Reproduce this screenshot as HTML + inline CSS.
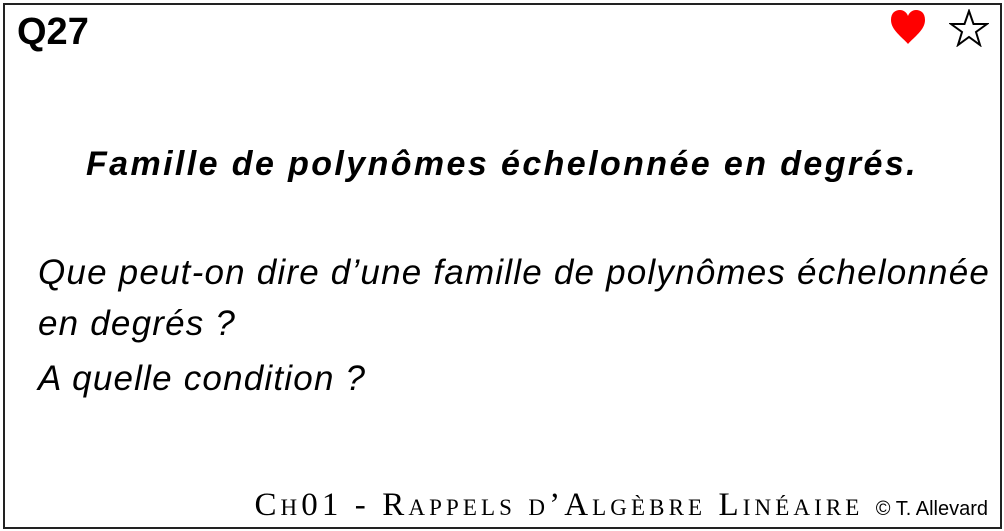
<!DOCTYPE html>
<html><head><meta charset="utf-8"><style>
html,body{margin:0;padding:0;background:#fff;}
body{width:1004px;height:531px;position:relative;overflow:hidden;font-family:"Liberation Sans",sans-serif;color:#000;}
.box{position:absolute;left:3px;top:3px;width:995px;height:522px;border:2px solid #222;}
.t{position:absolute;white-space:nowrap;line-height:1;}
.b{font-size:35px;font-style:italic;letter-spacing:1.2px;left:38px;}
</style></head><body>
<div class="box"></div>
<div class="t" style="left:17px;top:13px;font-size:38px;font-weight:bold;">Q27</div>
<svg style="position:absolute;left:890px;top:9px" width="36" height="37" viewBox="0 0 36 37"><path d="M18 35 C12 28 1 21 1 11 C1 4 5 1 10 1 C14 1 17 4 18 7 C19 4 22 1 26 1 C31 1 35 4 35 11 C35 21 24 28 18 35 Z" fill="#f00"/></svg>
<svg style="position:absolute;left:949px;top:9px" width="40" height="38" viewBox="0 0 40 38"><path d="M20 2 L24.5 15 L38 15 L27 23 L31 36 L20 28 L9 36 L13 23 L2 15 L15.5 15 Z" fill="none" stroke="#000" stroke-width="2" stroke-linejoin="miter"/></svg>
<div class="t" style="left:0;width:1004px;text-align:center;top:147px;font-size:34px;font-weight:bold;font-style:italic;letter-spacing:2.4px;">Famille de polynômes échelonnée en degrés.</div>
<div class="t b" style="top:255px;">Que peut-on dire d’une famille de polynômes échelonnée</div>
<div class="t b" style="top:306px;">en degrés ?</div>
<div class="t b" style="top:361px;">A quelle condition ?</div>
<div class="t" style="right:16px;top:489px;font-size:33px;letter-spacing:4.1px;font-family:'Liberation Serif',serif;font-variant:small-caps;">Ch01 - Rappels d’Algèbre Linéaire <span style="font-family:'Liberation Sans',sans-serif;font-size:20px;letter-spacing:0;font-variant:normal;">© T. Allevard</span></div>
</body></html>
